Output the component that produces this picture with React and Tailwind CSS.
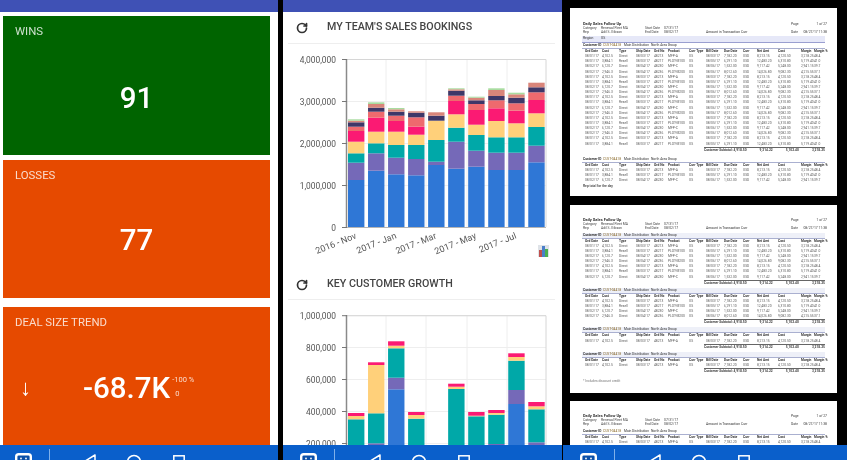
import { RotateCw } from "lucide-react";

const COLORS = ["#2f77d6", "#7569b8", "#00a8a8", "#ffd07a", "#fb1a73", "#ee6a6e", "#3e3768", "#d9857a", "#a9dca0"];

const BOOKINGS = [
  [180, 162.7, 153.3, 141.7, 131, 126.7, 122.3, 120.7, 119.3],
  [170.7, 153.3, 143.3, 131.7, 117.7, 111.7, 107.7, 104, 102.3],
  [174.3, 157.7, 145, 131.7, 121, 115.7, 111.7, 109.3, 108],
  [175.3, 159, 145, 134.7, 126.7, 117.3, 112.7, 111.3, 111.3],
  [165, 161.7, 140, 120.7, 120.7, 120.7, 115.7, 112.3, 112.3],
  [168.7, 141.7, 127.7, 114.3, 101, 95.7, 90.7, 89.3, 88.3],
  [166.7, 150.7, 135, 124.7, 110, 104, 100.3, 97.7, 96.7],
  [170, 152.7, 137.3, 121, 108.3, 100.3, 96, 90, 88.3],
  [170, 152.7, 137.3, 123.3, 110.7, 103.3, 97.7, 94.3, 92.7],
  [162.3, 145.7, 127, 113.3, 100, 92.3, 87.3, 82.7, 82.7],
];

const GROWTH = [
  [460, 450, 419.3, 416, 413],
  [460, 443.3, 413.3, 365, 362.3],
  [389.3, 377.7, 348.3, 345.7, 341.3],
  [460, 450, 418.7, 415, 412],
  null,
  [460, 445.3, 389, 386.7, 383.7],
  [460, 450, 416.3, 415.7, 412],
  [460, 444, 414.7, 413, 410],
  [404, 390, 360.7, 357, 353.3],
  [460, 442.3, 409.3, 406.3, 402],
];

const MONTHS = [
  ["2016 - Nov", 357],
  ["2017 - Jan", 397],
  ["2017 - Mar", 437],
  ["2017 - May", 477],
  ["2017 - Jul", 517],
];

function Bars({ data, base }) {
  return data.map((tops, i) =>
    tops
      ? tops.map((top, j) => {
          const bottom = j === 0 ? base : tops[j - 1];
          return <rect key={`${i}-${j}`} x={348 + i * 20.03} y={top} width="16.4" height={Math.max(bottom - top, 0)} fill={COLORS[j]} />;
        })
      : null
  );
}

function Grid({ top, bottom, ticks }) {
  return (
    <g>
      {[386, 426, 467, 507].map((x) => (
        <line key={x} x1={x} x2={x} y1={top} y2={bottom} stroke="#eeeeee" />
      ))}
      {ticks.map(([, y]) => (
        <line key={y} x1="347" x2="546" y1={y} y2={y} stroke="#eeeeee" />
      ))}
      <line x1="347" x2="546" y1={top} y2={top} stroke="#d6d6d6" />
      <line x1="546" x2="546" y1={top} y2={bottom} stroke="#d6d6d6" />
    </g>
  );
}

function Axis({ top, bottom, ticks }) {
  return (
    <g>
      <line x1="346.5" x2="346.5" y1={top} y2={bottom} stroke="#8a8a8a" strokeWidth="1.5" />
      {ticks.map(([label, y]) => (
        <g key={label}>
          <line x1="342" x2="347" y1={y} y2={y} stroke="#777777" />
          <text x="336" y={y + 3.2} textAnchor="end" fontSize="8.4" fill="#555555">
            {label}
          </text>
        </g>
      ))}
    </g>
  );
}

function BookingsChart() {
  const ticks = [
    ["4,000,000", 59.5],
    ["3,000,000", 101.5],
    ["2,000,000", 143.5],
    ["1,000,000", 185.5],
    ["0", 227.5],
  ];
  return (
    <svg viewBox="283 44 279 226" className="block h-[226px] w-full">
      <Grid top={59.5} bottom={227} ticks={ticks} />
      <Bars data={BOOKINGS} base={227} />
      <Axis top={59} bottom={227} ticks={ticks} />
      <line x1="347" x2="546" y1="227.5" y2="227.5" stroke="#b5b5b5" />
      {MONTHS.map(([label, x]) => (
        <text key={label} x={x} y="238" textAnchor="end" fontSize="9" fill="#555555" transform={`rotate(-22 ${x} 238)`}>
          {label}
        </text>
      ))}
      {/* chart type toggle */}
      <rect x="538" y="245" width="11" height="12" fill="#dfe3e8" />
      <rect x="539" y="250" width="3" height="7" fill="#c0504d" />
      <rect x="542" y="246" width="3" height="11" fill="#4a7fc9" />
      <rect x="545" y="249" width="3" height="8" fill="#4caf50" />
    </svg>
  );
}

function GrowthChart() {
  const ticks = [
    ["1,000,000", 315.7],
    ["800,000", 347.5],
    ["600,000", 379.5],
    ["400,000", 411.5],
    ["200,000", 443.5],
  ];
  return (
    <svg viewBox="283 300 279 145" className="block h-[145px] w-full">
      <Grid top={315.7} bottom={445} ticks={ticks} />
      <Bars data={GROWTH} base={507} />
      <Axis top={315} bottom={445} ticks={ticks} />
    </svg>
  );
}

function NavBar({ className }) {
  return (
    <div className={`flex h-[15px] shrink-0 items-start overflow-hidden bg-[#0a5fcb] ${className}`}>
      <svg width="17" height="15" viewBox="0 0 17 15" className="mt-2 block shrink-0">
        <rect x="1.2" y="1.2" width="14.6" height="14" rx="2.5" fill="#0a4fa8" stroke="#ffffff" strokeWidth="2.4" />
        <circle cx="6" cy="5.5" r="0.9" fill="#ffffff" />
        <circle cx="11" cy="5.5" r="0.9" fill="#ffffff" />
      </svg>
      <div className="mt-1 ml-[17px] h-[11px] w-px shrink-0 bg-[#7fb0ea]" />
      <svg width="16" height="11" viewBox="0 0 16 11" className="mt-[9px] ml-[31px] block shrink-0">
        <polygon points="1,9 14,1 14,17" fill="none" stroke="#ffffff" strokeWidth="1.5" strokeLinejoin="round" />
      </svg>
      <svg width="16" height="11" viewBox="0 0 16 11" className="mt-[9px] ml-[29px] block shrink-0">
        <circle cx="8" cy="8" r="6.5" fill="none" stroke="#ffffff" strokeWidth="1.5" />
      </svg>
      <svg width="12" height="11" viewBox="0 0 12 11" className="mt-[10px] ml-[31px] block shrink-0">
        <rect x="0.8" y="0.8" width="10.4" height="14" fill="none" stroke="#ffffff" strokeWidth="1.5" />
      </svg>
    </div>
  );
}

function StatCard({ title, className, children }) {
  return (
    <div className={`flex flex-col pt-[10px] text-white ${className}`}>
      <div className="pl-3 text-[11.4px] leading-[11px] text-white/80">{title}</div>
      {children}
    </div>
  );
}

function SectionHeader({ title, className }) {
  return (
    <div className={`mr-[7px] ml-[5px] flex items-center border-b border-[#eeeeee] pl-2 ${className}`}>
      <RotateCw size={12} strokeWidth={3.4} className="text-[#333333]" />
      <div className="ml-[19px] text-[10.7px] font-medium text-[#444444]">{title}</div>
    </div>
  );
}

const HEAD = ["Ord Date", "Cust", "Type", "Ship Date", "Ord No", "Product", "Curr Type", "Bill Date", "Due Date", "Curr", "Net Amt", "Cost", "Margin", "Margin %"];
const ROWS = [
  ["08/01/17", "4,102.5", "Direct", "08/03/17", "48213", "MFP-A", "US", "08/03/17", "7,182.20", "USD", "8,213.15", "4,120.50", "3,218.25", "48.4"],
  ["08/01/17", "3,884.1", "Resell", "08/03/17", "48217", "PLOT-M100", "US", "08/05/17", "6,291.10", "USD", "12,483.20", "6,310.80", "5,119.40", "41.0"],
  ["08/02/17", "6,120.7", "Direct", "08/04/17", "48230", "MFP-C", "US", "08/06/17", "1,532.00", "USD", "9,117.42", "5,248.00", "2,941.15", "39.7"],
  ["08/02/17", "2,946.3", "Direct", "08/04/17", "48236", "PLOT-M200", "US", "08/06/17", "8,012.60", "USD", "14,026.80", "9,082.30", "4,215.55", "37.1"],
];

function ReportRow({ cells, className = "" }) {
  return (
    <div className={`grid h-[5.15px] grid-cols-[17px_17px_17px_18px_14px_21px_17px_18px_19px_14px_21px_23px_13px_22px] items-center pl-[15px] text-[3.3px] leading-[5px] whitespace-nowrap ${className}`}>
      {cells.map((cell, i) => (
        <span key={i}>{cell}</span>
      ))}
    </div>
  );
}

function ReportHeader() {
  return (
    <div className="pr-[10px] pl-[13px] text-[3.4px] leading-[4px] whitespace-nowrap text-[#444444]">
      <div className="flex justify-between">
        <div className="text-[4px] font-bold text-[#333333]">Daily Sales Follow Up</div>
        <div className="flex w-[36px] justify-between">
          <span>Page</span>
          <span>1 of 27</span>
        </div>
      </div>
      <div className="flex">
        <span className="w-[18px]">Category</span>
        <span className="w-[44px]">Renewal Fleet MA</span>
        <span className="w-[19px]">Start Date</span>
        <span>07/31/17</span>
      </div>
      <div className="flex justify-between">
        <div className="flex">
          <span className="w-[18px]">Rep</span>
          <span className="w-[44px]">Adil S. Gibson</span>
          <span className="w-[19px]">End Date</span>
          <span className="w-[42px]">08/02/17</span>
          <span className="text-[#333333]">Amount in Transaction Curr</span>
        </div>
        <div className="flex w-[36px] justify-between">
          <span>Date</span>
          <span>08/27/17 11:38</span>
        </div>
      </div>
    </div>
  );
}

function SectionTitle({ band }) {
  return (
    <div className={`flex h-[5px] items-center text-[3.3px] leading-[5px] whitespace-nowrap text-[#333333] ${band ? "mx-3 bg-[#eef0f8] pl-px" : "pl-[13px]"}`}>
      <span className="w-[20px] font-bold">Customer ID</span>
      <span className="w-[21px] text-[#8a6a2a]">CUST-04418</span>
      <span className="w-[27px]">Main Distribution</span>
      <span>North Area Group</span>
    </div>
  );
}

function ReportSection({ rows, total, tall = false }) {
  return (
    <div>
      <SectionTitle band={tall} />
      <div className="mx-3 h-px bg-[#aab0d0]" />
      <ReportRow cells={HEAD} className="font-bold text-[#333333]" />
      {Array.from({ length: rows }, (_, i) => (
        <ReportRow key={i} cells={ROWS[i % ROWS.length]} className="text-[#5a5a5a]" />
      ))}
      {total && (
        <div className="mr-3 ml-[134px] flex h-[6px] justify-between border-t border-[#666666] text-[3.3px] leading-[5px] font-bold whitespace-nowrap text-[#444444]">
          <span>Customer Subtotal: 4,918.50</span>
          <span>9,314.22</span>
          <span>5,102.40</span>
          <span>3,218.25</span>
        </div>
      )}
    </div>
  );
}

function ReportPage({ height, children }) {
  return <div className={`shrink-0 overflow-hidden bg-white ${height}`}><div className="blur-[0.55px]">{children}</div></div>;
}

function ReportPane() {
  return (
    <div className="flex flex-1 flex-col gap-[8.5px] overflow-hidden bg-black pt-2 pr-[10px] pl-[7px]">
      <ReportPage height="h-[188px]">
        <div className="pt-[14px]">
          <ReportHeader />
          <div className="mx-3 mt-[2px] flex h-[7px] items-center border-b border-[#9a9fd0] bg-[#e6e8f8] pl-px text-[3.4px] text-[#333333]">
            <span className="w-[18px]">Region</span>
            <span>US</span>
          </div>
          <ReportSection rows={18} total />
          <div className="mt-[4px]">
            <ReportSection rows={3} />
          </div>
          <div className="mt-[1px] pl-[13px] text-[3.3px] leading-[5px] font-bold text-[#555555]">Rep total for the day</div>
        </div>
      </ReportPage>
      <ReportPage height="h-[188px]">
        <div className="pt-[13px]">
          <ReportHeader />
          <div className="mt-[3px]">
            <ReportSection rows={7} total tall />
          </div>
          <div className="mt-[2px]">
            <ReportSection rows={4} total tall />
          </div>
          <div className="mt-[2px]">
            <ReportSection rows={1} total tall />
          </div>
          <div className="mt-[2px]">
            <ReportSection rows={1} total tall />
          </div>
          <div className="mt-[5px] pl-[13px] text-[3.3px] leading-[5px] text-[#777777]">* Includes discount credit</div>
        </div>
      </ReportPage>
      <ReportPage height="h-[60px]">
        <div className="pt-[13px]">
          <ReportHeader />
          <div className="mt-[3px]">
            <ReportSection rows={1} />
          </div>
        </div>
      </ReportPage>
    </div>
  );
}

export default function App() {
  return (
    <div className="flex h-[460px] w-[847px] overflow-hidden bg-black font-[Roboto,sans-serif] blur-[0.3px]">
      <div className="flex w-[278px] shrink-0 flex-col bg-white">
        <div className="h-3 shrink-0 bg-[#3f51b5]" />
        <div className="flex flex-1 flex-col overflow-hidden pt-[3.5px] pr-2 pl-[3px]">
          <StatCard title="WINS" className="h-[139px] shrink-0 bg-[#006400]">
            <div className="mt-[21px] text-center text-[29.5px] leading-[80px] font-medium">91</div>
          </StatCard>
          <StatCard title="LOSSES" className="mt-[5.5px] h-[138px] shrink-0 bg-[#e64a00]">
            <div className="mt-[19px] text-center text-[29.5px] leading-[80px] font-medium">77</div>
          </StatCard>
          <StatCard title="DEAL SIZE TREND" className="mt-[9px] h-[139px] shrink-0 bg-[#e64a00]">
            <div className="mt-[30px] flex items-center">
              <div className="ml-[17px] w-[63px] text-[22px] leading-[60px] font-light">↓</div>
              <div className="text-[29.5px] leading-[60px] font-medium">-68.7K</div>
              <div className="ml-[2px] -translate-y-[1px] text-[7.5px] leading-[14px] text-white/80">
                <div>-100 %</div>
                <div className="pl-[3px]">0</div>
              </div>
            </div>
          </StatCard>
        </div>
        <NavBar className="pl-[15px]" />
      </div>

      <div className="ml-[5px] flex w-[279px] shrink-0 flex-col bg-white">
        <div className="h-3 shrink-0 bg-[#3f51b5]" />
        <div className="flex-1 overflow-hidden">
          <SectionHeader title="MY TEAM'S SALES BOOKINGS" className="h-[32px]" />
          <BookingsChart />
          <SectionHeader title="KEY CUSTOMER GROWTH" className="h-[30px]" />
          <GrowthChart />
        </div>
        <NavBar className="pl-[17px]" />
      </div>

      <div className="ml-px flex flex-1 flex-col">
        <ReportPane />
        <NavBar className="pl-[17px]" />
      </div>
    </div>
  );
}
